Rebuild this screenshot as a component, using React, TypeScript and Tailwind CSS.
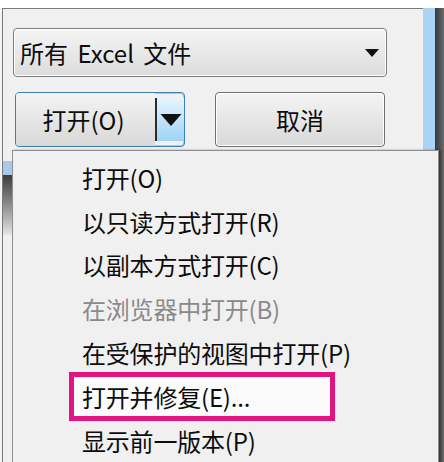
import React from "react";

const font = { fontFamily: '"Noto Sans CJK SC", "Microsoft YaHei", sans-serif' };

type Item = { label: string; disabled?: boolean; marked?: boolean };

const items: Item[] = [
  { label: "打开(O)" },
  { label: "以只读方式打开(R)" },
  { label: "以副本方式打开(C)" },
  { label: "在浏览器中打开(B)", disabled: true },
  { label: "在受保护的视图中打开(P)" },
  { label: "打开并修复(E)...", marked: true },
  { label: "显示前一版本(P)" },
];

function Caret({ className }: { className?: string }) {
  return (
    <svg viewBox="0 0 14 8" className={className}>
      <polygon points="0,0 14,0 7,8" fill="#111" />
    </svg>
  );
}

export default function App() {
  return (
    <div
      className="relative w-[444px] h-[462px] overflow-hidden bg-white text-[#0c0c0c]"
      style={font}
    >
      <div className="h-[8px] bg-white" />
      <div className="flex h-[454px]">
        <div className="w-[2px] bg-[#f4f4f4]" />
        {/* dialog body */}
        <div className="flex-1 flex flex-col border-l border-t border-[#7a7a7a] bg-[#f0f0f0]">
          <div className="mt-[19px] ml-[10px] w-[374px] h-[49px] rounded-[4px] border border-[#7d7d7d] bg-gradient-to-b from-[#f5f5f5] to-[#dcdcdc] shadow-[inset_0_0_0_1px_#ffffff] flex items-center pl-[6px] pr-[7px]">
            <span className="text-[24px] leading-none [word-spacing:4px]">所有 Excel 文件</span>
            <Caret className="ml-auto w-[14px] h-[8px]" />
          </div>
          <div className="mt-[15px] flex items-center h-[55px]">
            <div className="ml-[12px] w-[170px] h-[55px] rounded-[4px] border border-[#3c7fb1] shadow-[inset_0_0_0_1px_#9ad2f4] flex overflow-hidden">
              <div className="flex-1 flex items-center justify-center bg-gradient-to-b from-[#f4f4f4] to-[#d8d8d8] pr-[4px]">
                <span className="text-[24px] leading-none">打开(O)</span>
              </div>
              <div className="w-[29px] flex items-center justify-center border-l-[2px] border-[#2b2b2b] my-[5px] bg-gradient-to-b from-[#e6f4fc] to-[#9fd3f4]">
                <Caret className="w-[22px] h-[12px]" />
              </div>
            </div>
            <div className="ml-[30px] w-[170px] h-[55px] rounded-[4px] border border-[#707070] shadow-[inset_0_0_0_1px_#ffffff] bg-gradient-to-b from-[#f4f4f4] to-[#d9d9d9] flex items-center justify-center">
              <span className="text-[24px] leading-none">取消</span>
            </div>
          </div>
          {/* content of the window behind the popup */}
          <div className="mt-[14px] w-[9px] h-[14px] bg-[#a9c9ea]" />
          <div className="w-[9px] h-[60px] bg-gradient-to-b from-[#3e3e3e] to-[#e6e6e6]" />
        </div>
        <div className="w-[12px] bg-[#aad4f6]" />
        <div className="w-[9px] bg-gradient-to-r from-[#3a3a3a] to-[#6a6a6a]" />
      </div>

      {/* split-button popup menu */}
      <div className="absolute left-[12px] top-[150px] w-[427px] h-[330px] border border-[#8f8f8f] bg-[#f0f0f0] shadow-[2px_0_2px_rgba(0,0,0,0.35)] pt-[5px]">
        {items.map((it) => (
          <div key={it.label} className="relative h-[43.8px] flex items-center pl-[69px]">
            {it.marked && (
              <div className="absolute left-[56px] top-[-3px] w-[266px] h-[49px] border-[5px] border-[#e2147f] bg-[#fbfbfb]" />
            )}
            <span
              className={`relative text-[24px] leading-none tracking-[-0.2px] ${
                it.disabled ? "text-[#8a8a8a]" : "text-[#0c0c0c]"
              }`}
            >
              {it.label}
            </span>
          </div>
        ))}
      </div>
    </div>
  );
}
